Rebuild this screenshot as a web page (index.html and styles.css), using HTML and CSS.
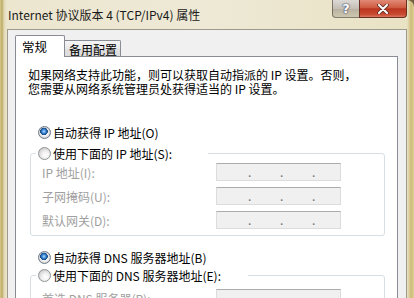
FILE: index.html
```html
<!DOCTYPE html>
<html lang="zh-CN">
<head>
    <meta charset="UTF-8">
    <title>Internet 协议版本 4 (TCP/IPv4) 属性</title>
    <link rel="stylesheet" href="styles.css">
</head>
<body>
    <div class="window">
        <div class="titlebar">
            <span class="title">Internet 协议版本 4 (TCP/IPv4) 属性</span>
            <div class="caption-buttons">
                <span class="cap-btn help">?</span>
                <span class="cap-btn close">
                    <svg width="12" height="10" viewBox="0 0 12 10">
                        <path d="M2 1 L10 9 M10 1 L2 9" stroke="#5a2a20" stroke-width="3.6" stroke-linecap="round"/>
                        <path d="M2 1 L10 9 M10 1 L2 9" stroke="#ffffff" stroke-width="2" stroke-linecap="round"/>
                    </svg>
                </span>
            </div>
        </div>

        <div class="client">
            <div class="tabs">
                <div class="tab active">常规</div>
                <div class="tab">备用配置</div>
            </div>

            <div class="panel">
                <p class="intro">如果网络支持此功能，则可以获取自动指派的 IP 设置。否则，<br>您需要从网络系统管理员处获得适当的 IP 设置。</p>

                <div class="option option-first"><span class="radio checked"></span>自动获得 IP 地址(O)</div>
                <fieldset class="group">
                    <legend class="option legend-ip"><span class="radio"></span>使用下面的 IP 地址(S):</legend>
                    <div class="field">
                        <span class="label">IP 地址(I):</span>
                        <span class="ip-box"><span class="dot">.</span><span class="dot">.</span><span class="dot">.</span></span>
                    </div>
                    <div class="field">
                        <span class="label">子网掩码(U):</span>
                        <span class="ip-box"><span class="dot">.</span><span class="dot">.</span><span class="dot">.</span></span>
                    </div>
                    <div class="field">
                        <span class="label">默认网关(D):</span>
                        <span class="ip-box"><span class="dot">.</span><span class="dot">.</span><span class="dot">.</span></span>
                    </div>
                </fieldset>

                <div class="option option-dns"><span class="radio checked"></span>自动获得 DNS 服务器地址(B)</div>
                <fieldset class="group group-dns">
                    <legend class="option legend-dns"><span class="radio"></span>使用下面的 DNS 服务器地址(E):</legend>
                    <div class="field">
                        <span class="label">首选 DNS 服务器(P):</span>
                        <span class="ip-box"><span class="dot">.</span><span class="dot">.</span><span class="dot">.</span></span>
                    </div>
                </fieldset>
            </div>
        </div>
    </div>
</body>
</html>
```

FILE: styles.css
```css
* {
    margin: 0;
    padding: 0;
    box-sizing: border-box;
}

html,
body {
    width: 414px;
    height: 298px;
    overflow: hidden;
    background: #6f6140;
}

body {
    font-family: "Noto Sans CJK SC", "Noto Sans", sans-serif;
    font-size: 12px;
    color: #000;
}

.window {
    height: 298px;
    padding: 0 7px;
    border-top-right-radius: 7px;
    background: linear-gradient(90deg, #d8cb90 0, #bcaa62 2px, #e2d9b4 4px, #ece6cf 7px, #eee9d6 50%, #e9e2c4 calc(100% - 7px), #cdbc7a calc(100% - 3px), #dccf94 100%);
}

/* title bar */
.titlebar {
    height: 29px;
    display: flex;
    align-items: flex-start;
}

.title {
    margin: 8px 0 0 1px;
    line-height: 14px;
    font-size: 12px;
    color: #1a1a1a;
}

.caption-buttons {
    margin-left: auto;
    display: flex;
}

.cap-btn {
    height: 18px;
    display: flex;
    align-items: center;
    justify-content: center;
}

.help {
    width: 27px;
    border: 1px solid rgba(70, 62, 45, 0.6);
    border-top: 0;
    border-right: 0;
    border-bottom-left-radius: 4px;
    background: linear-gradient(#dcd9d6, #c4bfb6 50%, #b7b0a0 51%, #cdc6ae);
    color: #fff;
    font-family: "DejaVu Sans", sans-serif;
    font-weight: bold;
    font-size: 13px;
    text-shadow: 0 0 1px #4a4f6a, 0 0 1px #4a4f6a, 0 0 2px #4a4f6a;
}

.close {
    width: 48px;
    border: 1px solid #6a2e22;
    border-top: 0;
    border-bottom-right-radius: 4px;
    background: linear-gradient(#e08a76, #cf5a42 45%, #bb3520 52%, #c94a30 85%, #da7a60);
}

/* client area */
.client {
    height: 269px;
    background: #f0f0f0;
    border: 1px solid #9d9a8c;
    border-bottom: 0;
    padding: 5px 8px 0 7px;
}

.tabs {
    height: 21px;
    display: flex;
    align-items: flex-end;
}

.tab {
    height: 16px;
    width: 56px;
    padding: 2px 0 0 4px;
    line-height: 14px;
    border: 1px solid #898c95;
    border-left: 0;
    border-bottom: 0;
    border-top-right-radius: 2px;
    background: linear-gradient(#f5f5f5, #e9e9e9 50%, #e0e0e0 51%, #dcdcdc);
}

.tab.active {
    position: relative;
    z-index: 1;
    height: 22px;
    width: 50px;
    margin-bottom: -1px;
    padding: 4px 0 0 6px;
    border-left: 1px solid #898c95;
    border-radius: 2px 2px 0 0;
    background: #fff;
    font-size: 12.5px;
}

.panel {
    height: 260px;
    background: #fff;
    border: 1px solid #898c95;
    padding: 11px 12px 0 12px;
}

.intro {
    line-height: 14px;
    white-space: nowrap;
}

/* radio options */
.option {
    height: 18px;
    display: flex;
    align-items: center;
    gap: 2px;
    white-space: nowrap;
}

.option-first {
    margin: 27px 0 0 10px;
}

.option-dns {
    margin: 12px 0 0 10px;
}

.radio {
    width: 13px;
    height: 13px;
    flex: none;
    border-radius: 50%;
    border: 1px solid #8f9294;
    background: radial-gradient(circle at 60% 65%, #ffffff 0, #f2f2f2 35%, #d5d5d5 70%, #bdbdbd 100%);
}

.radio.checked {
    border-color: #6d7b8a;
    background:
        radial-gradient(circle at 45% 40%, #b9e1ff 0, #4f9ae4 1.5px, #1e5b9f 3px, #17467d 3.6px, transparent 4px),
        radial-gradient(circle, #ffffff 0, #f3f3f3 45%, #d0d0d0 75%, #bcbcbc 100%);
}

/* group boxes */
.group {
    margin: 3px 0 0 2px;
    padding: 1px 0 6px 11px;
    border: 1px solid #d5dfe5;
    border-radius: 3px;
    min-width: 0;
}

.group-dns {
    margin-top: 0;
    padding-top: 5px;
}

.group legend {
    margin-left: -6px;
    padding: 0 0 0 2px;
}

.legend-ip {
    width: 172px;
}

.legend-dns {
    width: 212px;
}

.field {
    height: 18px;
    display: flex;
    align-items: center;
}

.field + .field {
    margin-top: 6px;
}

.label {
    width: 174px;
    color: #a0a0a0;
    white-space: nowrap;
}

.ip-box {
    width: 125px;
    height: 18px;
    display: flex;
    gap: 29px;
    padding-left: 31px;
    background: #f0f0f0;
    border: 1px solid #dcdcdc;
    border-top-color: #acacac;
}

.dot {
    width: 3px;
    line-height: 15px;
    text-align: center;
    color: #6d6d6d;
}
```
